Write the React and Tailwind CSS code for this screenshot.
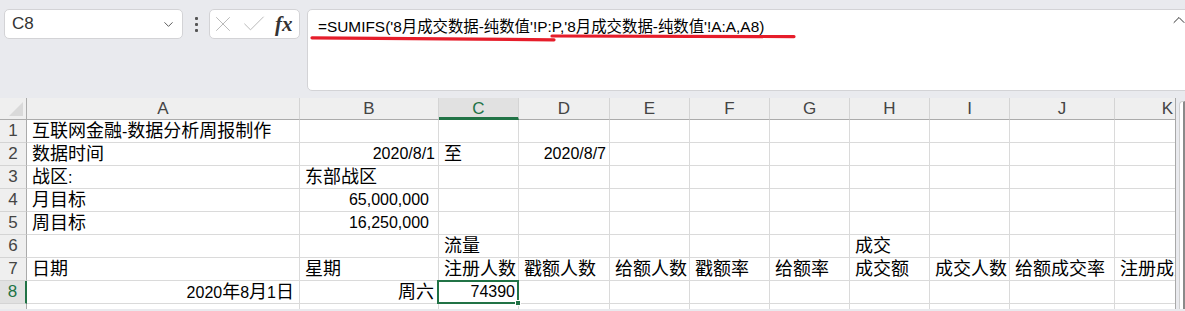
import React from 'react';
import { ChevronDown, ChevronUp, X, Check } from 'lucide-react';

const FONT = { fontFamily: '"Liberation Sans", "Noto Sans CJK SC", sans-serif' };

// split text into CJK and latin runs so each gets its own size
const Txt = ({ s }) => {
  const parts = s.split(/([\u3000-\u9fff\uff00-\uffef]+)/).filter(Boolean);
  return parts.map((p, i) =>
    /[\u3000-\u9fff\uff00-\uffef]/.test(p) ? (
      <span key={i} className="text-[18px]">{p}</span>
    ) : (
      <span key={i} className="text-[16px]">{p}</span>
    )
  );
};

const letters = ['A', 'B', 'C', 'D', 'E', 'F', 'G', 'H', 'I', 'J', 'K'];

const rows = [
  { A: { t: '互联网金融-数据分析周报制作' } },
  { A: { t: '数据时间' }, B: { t: '2020/8/1', r: true }, C: { t: '至' }, D: { t: '2020/8/7', r: true } },
  { A: { t: '战区:' }, B: { t: '东部战区' } },
  { A: { t: '月目标' }, B: { t: '65,000,000', r: true, pad: 'pr-[9px]' } },
  { A: { t: '周目标' }, B: { t: '16,250,000', r: true, pad: 'pr-[9px]' } },
  { C: { t: '流量' }, H: { t: '成交' } },
  {
    A: { t: '日期' }, B: { t: '星期' }, C: { t: '注册人数' }, D: { t: '戳额人数' }, E: { t: '给额人数' },
    F: { t: '戳额率' }, G: { t: '给额率' }, H: { t: '成交额' }, I: { t: '成交人数' }, J: { t: '给额成交率' },
    K: { t: '注册成交率' },
  },
  { A: { t: '2020年8月1日', r: true, pad: 'pr-[5px]' }, B: { t: '周六', r: true, pad: 'pr-[4px]' }, C: { t: '74390', r: true, sel: true } },
  {},
];

const Cell = ({ c }) => {
  if (!c) return <div className="border-r border-b border-[#dadada]" />;
  return (
    <div
      className={`relative flex items-center whitespace-nowrap border-r border-b border-[#dadada] leading-[22px] text-black ${
        c.r ? `justify-end ${c.pad || 'pr-[3px]'}` : 'pl-[5px]'
      }`}
    >
      <span className="relative z-10">
        <Txt s={c.t} />
      </span>
      {c.sel && (
        <div className="absolute -left-[2px] -top-[1px] -right-[1px] -bottom-[1px] border-2 border-[#217346] z-20">
          <div className="absolute -right-[4px] -bottom-[4px] w-[6px] h-[6px] bg-[#217346] border border-white" />
        </div>
      )}
    </div>
  );
};

export default function App() {
  return (
    <div className="relative w-[1185px] h-[311px] overflow-hidden bg-[#e9eaee]" style={FONT}>
      {/* formula toolbar */}
      <div className="flex items-start h-[100px] pt-[9px] pl-[4px] border-t-[2px] border-[#e2e4e8] -mt-[2px]">
        <div className="shrink-0 flex items-center justify-between w-[179px] h-[30px] bg-white border border-[#d3d3d6] rounded-[5px] pl-[7px] pr-[6px]">
          <span className="text-[17px] text-[#333]">C8</span>
          <ChevronDown size={15} strokeWidth={1.4} className="text-[#444]" />
        </div>
        <div className="shrink-0 flex flex-col items-center gap-[3px] w-[26px] pt-[8px]">
          <span className="w-[3px] h-[3px] bg-[#555] rounded-[1px]" />
          <span className="w-[3px] h-[3px] bg-[#555] rounded-[1px]" />
          <span className="w-[3px] h-[3px] bg-[#555] rounded-[1px]" />
        </div>
        <div className="shrink-0 flex items-center w-[91px] h-[30px] bg-white border border-[#d3d3d6] rounded-[5px]">
          <X size={26} strokeWidth={0.9} className="text-[#b8b8b8] shrink-0" />
          <Check size={28} strokeWidth={0.85} className="text-[#b8b8b8] ml-[4px] shrink-0" />
          <span
            className="ml-[7px] text-[21px] italic font-bold text-[#333] leading-none"
            style={{ fontFamily: '"Liberation Serif", serif' }}
          >
            fx
          </span>
        </div>
        <div className="shrink-0 relative ml-[7px] w-[900px] h-[82px] bg-white border border-[#d3d3d6] rounded-[5px] pl-[10px] pt-[5px]">
          <span className="text-[15.4px] leading-[20px] text-black">
            =SUMIFS('8月成交数据-纯数值'!P:P,'8月成交数据-纯数值'!A:A,A8)
          </span>
          <ChevronUp size={20} strokeWidth={1.2} className="absolute left-[861px] top-0 text-[#333]" />
        </div>
      </div>

      {/* red annotation underline */}
      <svg className="absolute left-0 top-0 pointer-events-none" width="1185" height="60">
        <path d="M312 37.8 L554 39.8" stroke="#e61d2a" strokeWidth="3.2" strokeLinecap="round" fill="none" />
        <path d="M552 36 L794 36.6" stroke="#e61d2a" strokeWidth="3.2" strokeLinecap="round" fill="none" />
      </svg>

      {/* sheet */}
      <div className="flex">
        <div className="w-[1176px] h-[211px] overflow-hidden bg-white border-r border-[#a8a8a8]">
          <div className="grid grid-cols-[27px_273px_139px_80px_91px_80px_80px_80px_80px_80px_105px_61px] grid-rows-[22px_repeat(9,23px)]">
            {/* corner */}
            <div className="relative bg-[#efefef] border-r border-b border-[#ababab]">
              <div className="absolute right-[3px] bottom-[3px] w-0 h-0 border-l-[14px] border-l-transparent border-b-[14px] border-b-[#d9d9d9]" />
            </div>
            {letters.map((l) =>
              l === 'C' ? (
                <div
                  key={l}
                  className="flex items-center justify-center bg-[#e1e1e1] border-r border-[#d4d4d4] border-b-[3px] border-b-[#217346] text-[17px] text-[#217346] pt-[2px]"
                >
                  {l}
                </div>
              ) : (
                <div
                  key={l}
                  className={`flex items-center justify-center bg-[#efefef] border-r border-[#d4d4d4] border-b border-b-[#ababab] text-[17px] text-[#444] ${
                    l === 'K' ? 'justify-end pr-[2px]' : ''
                  }`}
                >
                  {l}
                </div>
              )
            )}
            {rows.map((row, i) => (
              <React.Fragment key={i}>
                {i === 7 ? (
                  <div className="flex items-center justify-center bg-[#e1e1e1] border-r-2 border-r-[#217346] border-b border-[#d4d4d4] text-[17px] text-[#217346]">
                    {i + 1}
                  </div>
                ) : (
                  <div className="flex items-center justify-center bg-[#efefef] border-r border-r-[#ababab] border-b border-[#d4d4d4] text-[17px] text-[#444]">
                    {i < 8 ? i + 1 : ''}
                  </div>
                )}
                {letters.map((l) => (
                  <Cell key={l} c={row[l]} />
                ))}
              </React.Fragment>
            ))}
          </div>
        </div>
        <div className="w-[9px] h-[211px] pt-[3px] pl-[3px]">
          <div className="w-full h-full bg-white rounded-tl-[4px] border-l border-t border-[#cfcfcf] border-r-2 border-r-[#8a8a8a]" />
        </div>
      </div>
    </div>
  );
}
